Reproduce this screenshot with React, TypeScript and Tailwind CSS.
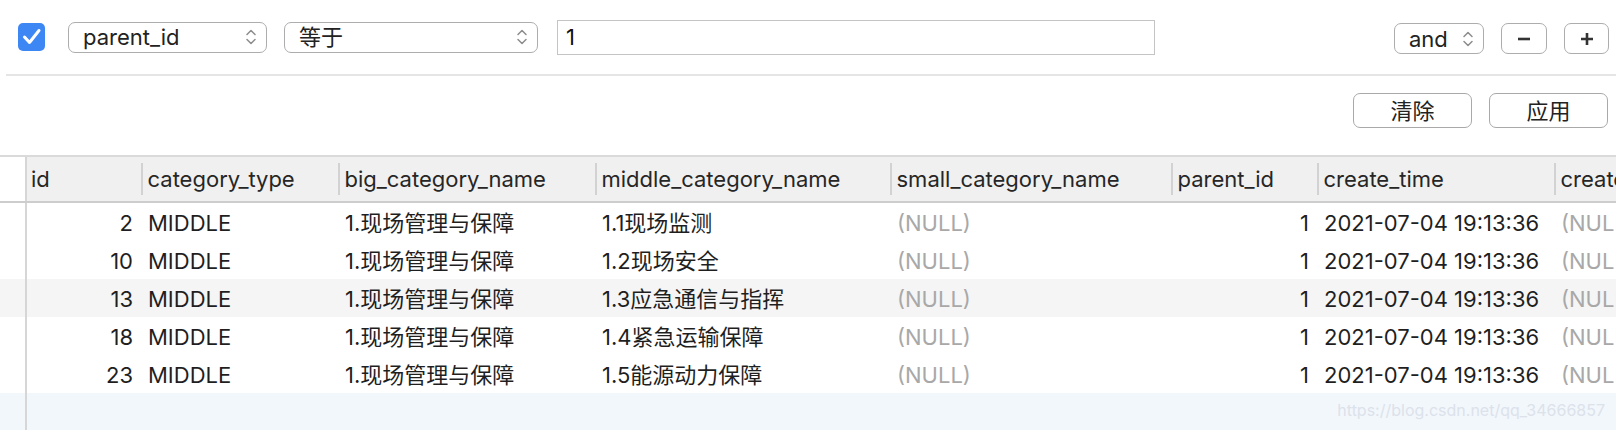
import React from 'react'

const font = { fontFamily: 'Inter, "Noto Sans CJK SC", sans-serif' }

const cols = [
  { name: 'id', w: 'w-[114px]', right: true, first: true },
  { name: 'category_type', w: 'w-[197px]' },
  { name: 'big_category_name', w: 'w-[257px]' },
  { name: 'middle_category_name', w: 'w-[295px]' },
  { name: 'small_category_name', w: 'w-[281px]' },
  { name: 'parent_id', w: 'w-[146px]', right: true },
  { name: 'create_time', w: 'w-[237px]' },
  { name: 'create_by', w: 'w-[200px]' },
]

const rows: (string | number | null)[][] = [
  [2, 'MIDDLE', '1.现场管理与保障', '1.1现场监测', null, 1, '2021-07-04 19:13:36', null],
  [10, 'MIDDLE', '1.现场管理与保障', '1.2现场安全', null, 1, '2021-07-04 19:13:36', null],
  [13, 'MIDDLE', '1.现场管理与保障', '1.3应急通信与指挥', null, 1, '2021-07-04 19:13:36', null],
  [18, 'MIDDLE', '1.现场管理与保障', '1.4紧急运输保障', null, 1, '2021-07-04 19:13:36', null],
  [23, 'MIDDLE', '1.现场管理与保障', '1.5能源动力保障', null, 1, '2021-07-04 19:13:36', null],
]

function Chevrons() {
  return (
    <svg width="12" height="18" viewBox="0 0 12 18" fill="none" stroke="#8c8c8c" strokeWidth="1.5" strokeLinecap="round" strokeLinejoin="round">
      <path d="M2 6.5 L6 2.5 L10 6.5" />
      <path d="M2 11.5 L6 15.5 L10 11.5" />
    </svg>
  )
}

function Select({ label, w }: { label: string; w: string }) {
  return (
    <div className={`${w} h-[31px] flex items-center justify-between pl-[14px] pr-[9px] border-[1.5px] border-[#adadad] rounded-[7px] bg-white text-[22px] text-[#222]`}>
      <span className="leading-none">{label}</span>
      <Chevrons />
    </div>
  )
}

export default function App() {
  return (
    <div className="relative w-[1616px] h-[430px] overflow-hidden bg-white text-[#1f1f1f]" style={font}>
      {/* filter row */}
      <div className="h-[74px] flex items-center pl-[18px] pr-[7px]">
        <div className="w-[27px] h-[28px] rounded-[5px] bg-[#3d87f5] flex items-center justify-center">
          <svg width="27" height="28" viewBox="0 0 27 28" fill="none" stroke="white" strokeWidth="3" strokeLinecap="round" strokeLinejoin="round">
            <path d="M6.5 14 L11.5 19.5 L21 7.5" />
          </svg>
        </div>
        <div className="ml-[23px]">
          <Select label="parent_id" w="w-[199px]" />
        </div>
        <div className="ml-[17px]">
          <Select label="等于" w="w-[254px]" />
        </div>
        <div className="ml-[19px] w-[598px] h-[35px] border border-[#c4c4c4] flex items-center pl-[8px] text-[22px] text-[#111]">
          1
        </div>
        <div className="ml-auto flex items-center gap-[17px] pt-[3px]">
          <Select label="and" w="w-[90px]" />
          <div className="w-[46px] h-[31px] border-[1.5px] border-[#adadad] rounded-[7px] flex items-center justify-center">
            <svg width="14" height="14" viewBox="0 0 14 14" stroke="#333" strokeWidth="2.6">
              <path d="M1 7 H13" />
            </svg>
          </div>
          <div className="w-[45px] h-[31px] border-[1.5px] border-[#adadad] rounded-[7px] flex items-center justify-center">
            <svg width="14" height="14" viewBox="0 0 14 14" stroke="#333" strokeWidth="2.6">
              <path d="M1 7 H13 M7 1 V13" />
            </svg>
          </div>
        </div>
      </div>
      <div className="ml-[6px] h-[2px] bg-[#e5e5e5]" />

      {/* buttons */}
      <div className="flex justify-end gap-[17px] pr-[8px] pt-[17px]">
        <button className="w-[119px] h-[35px] border-[1.5px] border-[#a9a9a9] rounded-[7px] bg-white text-[22px] text-[#222] leading-none">清除</button>
        <button className="w-[119px] h-[35px] border-[1.5px] border-[#a9a9a9] rounded-[7px] bg-white text-[22px] text-[#222] leading-none">应用</button>
      </div>

      {/* table */}
      <div className="mt-[27px] w-[1616px] overflow-hidden">
        <div className="flex h-[48px] border-t-2 border-b-2 border-t-[#dadada] border-b-[#cdcdcd] w-max">
          <div className="w-[27px] shrink-0 border-r-2 border-[#d6d6d6] bg-white" />
          {cols.map((c) => (
            <div key={c.name} className={`${c.w} shrink-0 flex items-center bg-[#f0f0f0] text-[22px] text-[#262626]`}>
              {!c.first && <div className="w-[1.5px] h-[32px] bg-[#d2d2d2]" />}
              <span className={c.first ? 'pl-[4px]' : 'pl-[5px]'}>{c.name}</span>
            </div>
          ))}
        </div>
        {rows.map((r, i) => (
          <div key={i} className={`flex h-[38px] w-max ${i === 2 ? 'bg-[#f5f5f5]' : 'bg-white'}`}>
            <div className="w-[27px] shrink-0 border-r-2 border-[#d6d6d6]" />
            {cols.map((c, j) => (
              <div
                key={c.name}
                className={`${c.w} shrink-0 flex items-center pt-[3px] text-[22px] whitespace-nowrap ${c.right ? 'justify-end pr-[8px]' : 'pl-[7px]'} ${r[j] === null ? 'text-[#a8a8a8]' : 'text-[#1f1f1f]'}`}
              >
                {r[j] === null ? '(NULL)' : r[j]}
              </div>
            ))}
          </div>
        ))}
        <div className="flex h-[38px] bg-[#f2f7fc]">
          <div className="w-[27px] shrink-0 border-r-2 border-[#d6d6d6]" />
        </div>
      </div>

      <div className="absolute right-[11px] top-[402px] text-[16px] text-[#dce2ea] leading-none">
        https://blog.csdn.net/qq_34666857
      </div>
    </div>
  )
}
